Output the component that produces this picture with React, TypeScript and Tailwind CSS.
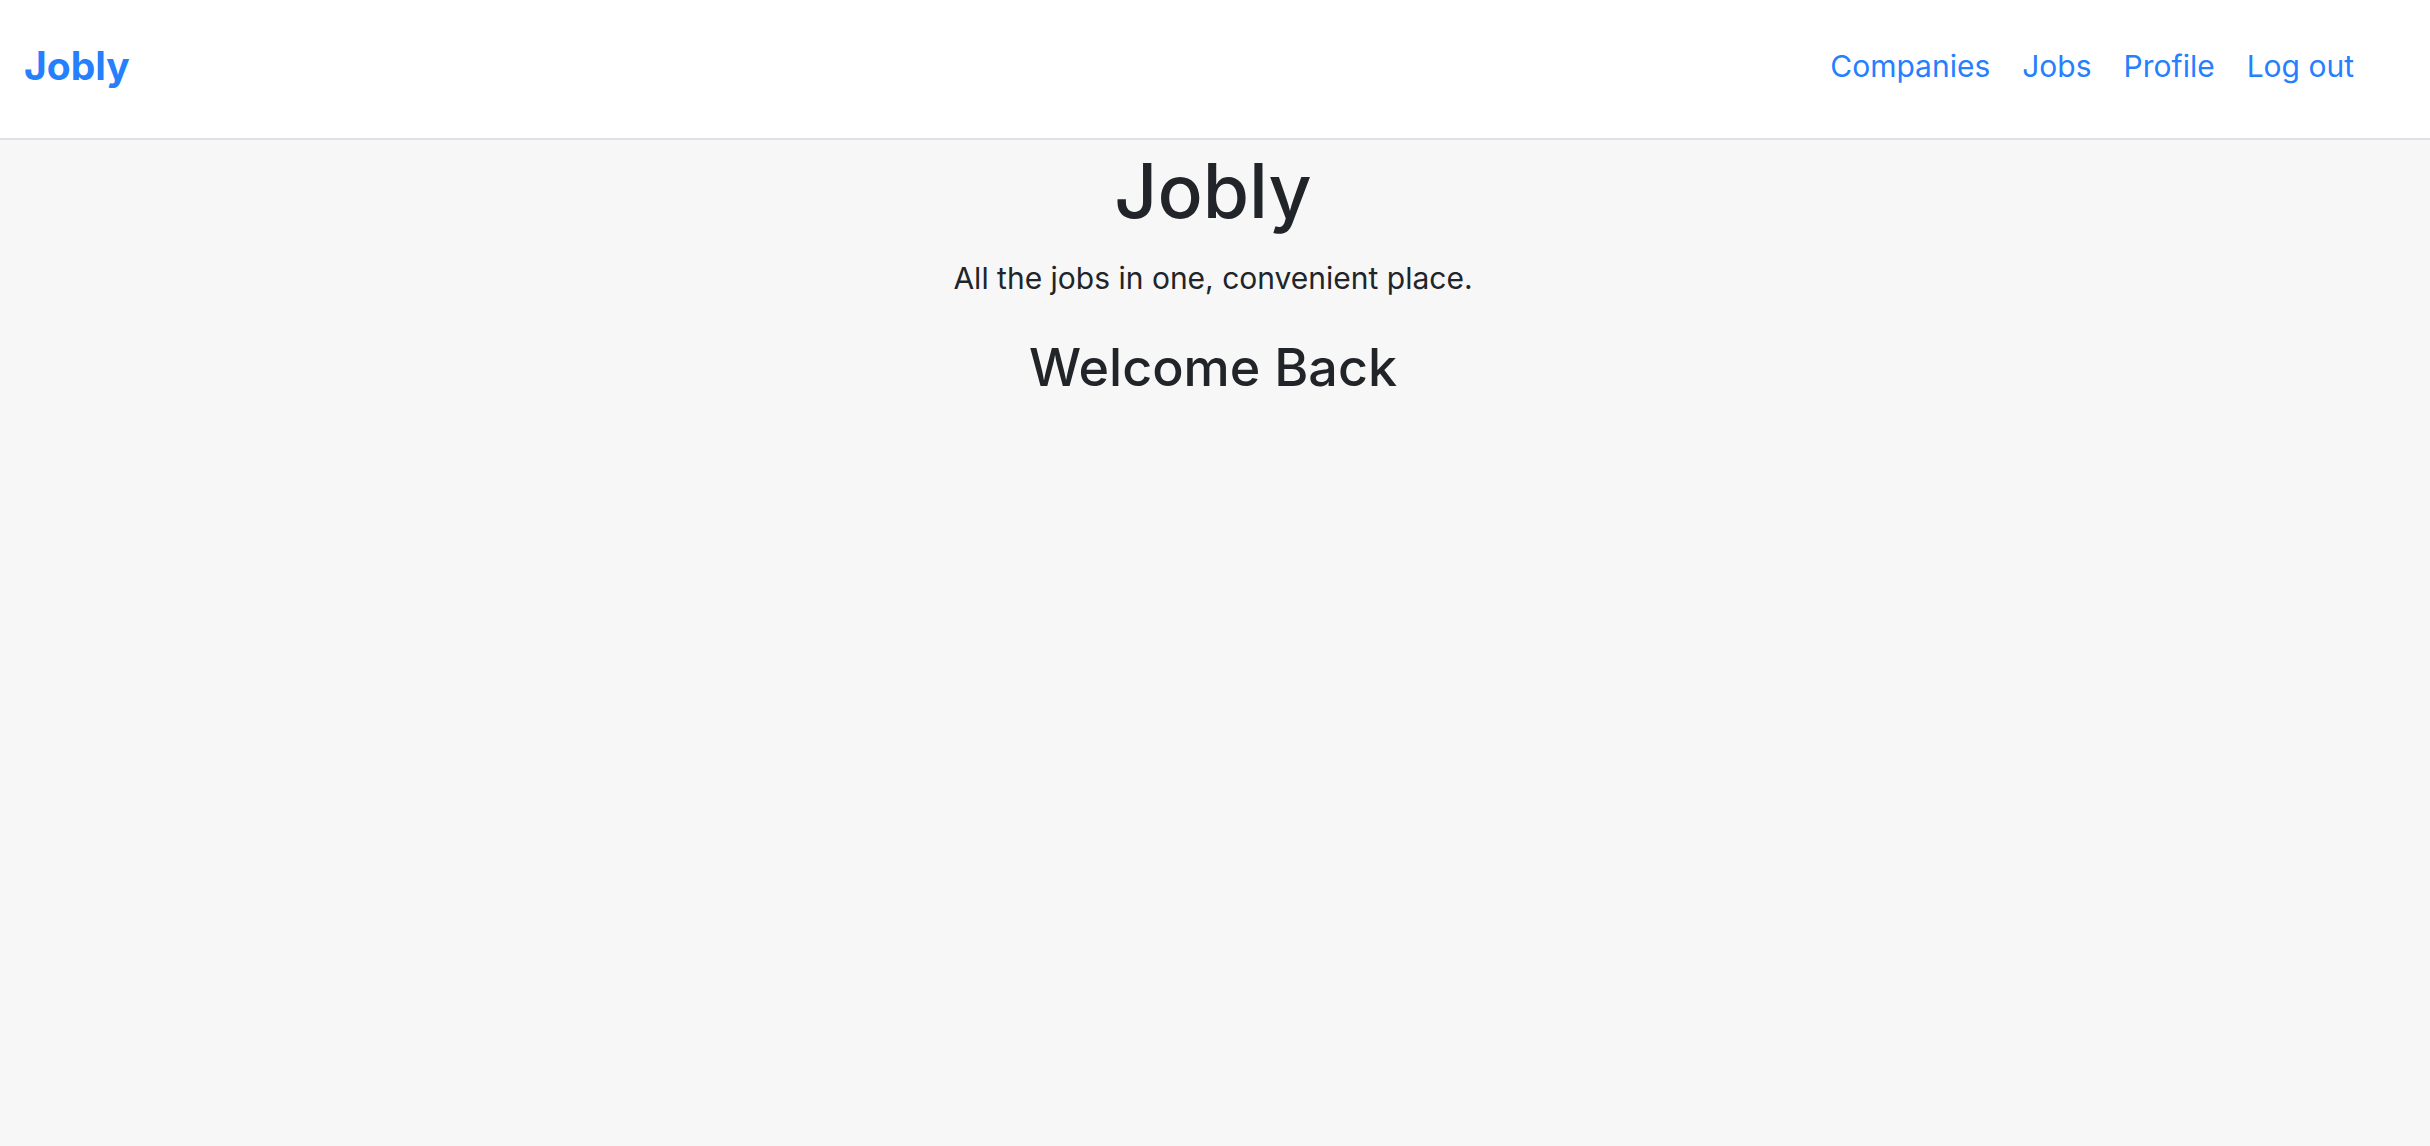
const links = ["Companies", "Jobs", "Profile", "Log out"];

export default function App() {
  return (
    <div className="min-h-screen bg-[#f7f7f7] font-[Inter,sans-serif] text-[#212529]">
      <header className="flex items-center justify-between border-b-2 border-[#dee2e6] bg-white pt-9 pr-19 pb-[42px] pl-6">
        <a href="#home" className="text-[39px] leading-[60px] font-bold text-[#267ffd]">
          Jobly
        </a>
        <nav className="flex gap-8">
          {links.map((label) => (
            <a key={label} href="#nav" className="text-[30px] leading-[48px] text-[#267ffd]">
              {label}
            </a>
          ))}
        </nav>
      </header>
      <main className="pt-1 pr-1 text-center">
        <h1 className="mb-4 text-[75px] leading-[94px] font-medium">Jobly</h1>
        <p className="mb-8 text-[30px] leading-[48px]">All the jobs in one, convenient place.</p>
        <h2 className="text-[52px] leading-[68px] font-medium">Welcome Back</h2>
      </main>
    </div>
  );
}
